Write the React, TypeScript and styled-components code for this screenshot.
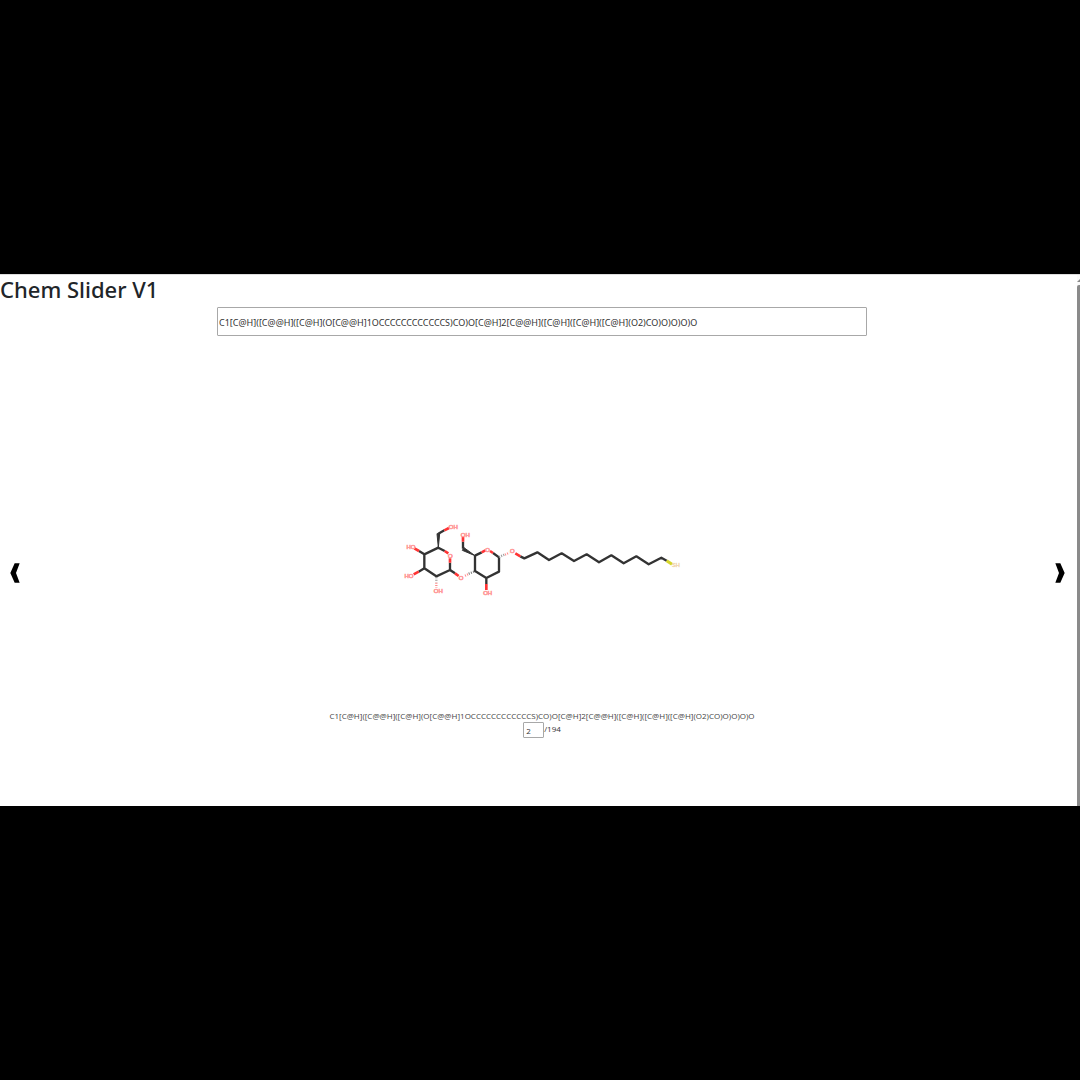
import React, { useState } from "react";
import styled, { createGlobalStyle } from "styled-components";

const GlobalStyle = createGlobalStyle`
  *, *::before, *::after { box-sizing: border-box; }
  body {
    margin: 0;
    background: #000;
    color: #212529;
    font-family: "Noto Sans", "Open Sans", sans-serif;
  }
`;

const Page = styled.div`
  min-height: 100vh;
  display: flex;
  flex-direction: column;
  justify-content: center;
`;

const Window = styled.div`
  display: flex;
  background: #fff;
  border-top: 1px solid #ddd;
`;

const Content = styled.main`
  flex: 1;
  min-width: 0;
`;

const Title = styled.h1`
  margin: 0 0 4px;
  font-size: 22px;
  font-weight: 500;
  line-height: 28px;
`;

const SearchRow = styled.form`
  display: flex;
  justify-content: center;
  padding-left: 7px;
`;

const SmilesInput = styled.input`
  width: 650px;
  max-width: 90%;
  height: 29px;
  padding: 2px 1px 0;
  border: 1px solid #a8a8a8;
  border-radius: 1px;
  color: #333;
  font-family: inherit;
  font-size: 9px;
  outline: none;
`;

const Slider = styled.section`
  display: flex;
  align-items: center;
  justify-content: space-between;
  padding: 4px 12px 0 10px;
`;

const ArrowButton = styled.button`
  display: flex;
  padding: 0;
  border: 0;
  background: none;
  color: #000;
  cursor: pointer;
`;

const Slide = styled.figure`
  display: flex;
  flex-direction: column;
  align-items: center;
  margin: 0;
  padding: 175px 0 68px 9px;
  font-family: "Open Sans", "Noto Sans", sans-serif;
`;

const Drawing = styled.svg`
  display: block;
  margin: 0 4px 105px 0;
`;

const Caption = styled.figcaption`
  color: #444;
  font-size: 8px;
  line-height: 12px;
`;

const Counter = styled.label`
  display: flex;
  color: #333;
  font-size: 8px;
  line-height: 14px;
`;

const CounterInput = styled.input`
  width: 21px;
  height: 16px;
  padding: 1px 2px 0;
  border: 1px solid #a8a8a8;
  border-radius: 1px;
  color: #333;
  font-family: inherit;
  font-size: 8px;
  outline: none;
`;

const Scrollbar = styled.div`
  width: 3px;
  padding-top: 4px;
  display: flex;
  flex-direction: column;
  gap: 3px;
  background: #fafafa;
`;

const Thumb = styled.div`
  flex: 1;
  background: #8a8a8a;
  border-radius: 2px 0 0 0;
`;

const SMILES =
  "C1[C@H]([C@@H]([C@H](O[C@@H]1OCCCCCCCCCCCCS)CO)O[C@H]2[C@@H]([C@H]([C@H]([C@H](O2)CO)O)O)O)O";

const Chevron = ({ flipped }: { flipped?: boolean }) => (
  <svg width="10" height="20" viewBox="0 0 30 60" fill="currentColor" aria-hidden="true">
    <path
      d="M14 1H29L18 30L29 59H14L1 30Z"
      transform={flipped ? "matrix(-1 0 0 1 30 0)" : undefined}
    />
  </svg>
);

const atoms: [string, number, number][] = [
  ["OH", 175, 36],
  ["HO", 48, 96],
  ["HO", 42, 182],
  ["OH", 130, 227],
  ["O", 166, 122],
  ["O", 198, 188],
  ["OH", 211, 59],
  ["O", 278, 104],
  ["OH", 278, 235],
  ["O", 352, 109],
];

const Molecule = () => (
  <Drawing width="290" height="90" viewBox="0 0 870 270" role="img" aria-label="Molecule structure">
    <g fill="none" stroke="#333" strokeWidth="7" strokeLinejoin="round">
      <path d="M165 143V165L124 184L88 160V118L130 98L149 108" />
      <path d="M130 56L148 46M88 118L72 108M88 160L71 170M165 165L180 175" />
      <path d="M240 122V168L274 189L312 170V127L294 114M240 122L260 112M274 189V207M204 101V80" />
      <path d="M376 124L388 130L427 112L462 135L500 115L537 138L575 118L612 142L649 121L686 145L724 124L761 148L799 128L815 137" />
    </g>
    <g fill="#333" stroke="#333" strokeWidth="3" strokeLinejoin="round">
      <path d="M130 98L126 56H134Z" />
      <path d="M240 122L202 106L207 98Z" />
    </g>
    <g fill="none" stroke="#ff3434" strokeWidth="8">
      <path d="M148 46L162 39M72 108L58 100M71 170L56 178M180 175L191 183M165 143V130M149 108L160 115" />
      <path d="M204 80V66M260 112L271 106M294 114L285 108M274 207V225M361 115L376 124" />
    </g>
    <g fill="none" strokeWidth="7" strokeDasharray="3 4">
      <path d="M124 187V202" stroke="#999" />
      <path d="M124 203V218" stroke="#ff8a8a" />
      <path d="M237 170L221 176" stroke="#777" />
      <path d="M219 178L207 184" stroke="#ff8a8a" />
      <path d="M312 126L328 119" stroke="#999" />
      <path d="M330 119L343 113" stroke="#ff8a8a" />
    </g>
    <path d="M815 137L831 148" stroke="#d6d52b" strokeWidth="9" />
    <g fontFamily="Liberation Sans, sans-serif" fontSize="18" textAnchor="middle">
      <g fill="#ff5c5c" stroke="#ff9c9c" strokeWidth="2">
        {atoms.map(([label, x, y]) => (
          <text key={`${x}-${y}`} x={x} y={y + 6}>
            {label}
          </text>
        ))}
      </g>
      <text x="843" y="157" fontSize="17" fill="#e5b87c" stroke="#f3dcb4">
        SH
      </text>
    </g>
  </Drawing>
);

export default function App() {
  const [smiles, setSmiles] = useState(SMILES);
  const [index, setIndex] = useState("2");
  const step = (by: number) =>
    setIndex(String(Math.min(194, Math.max(1, (Number(index) || 1) + by))));

  return (
    <Page>
      <GlobalStyle />
      <Window>
        <Content>
          <Title>Chem Slider V1</Title>
          <SearchRow onSubmit={(e) => e.preventDefault()}>
            <SmilesInput
              aria-label="SMILES"
              spellCheck={false}
              value={smiles}
              onChange={(e) => setSmiles(e.target.value)}
            />
          </SearchRow>
          <Slider>
            <ArrowButton type="button" aria-label="Previous" onClick={() => step(-1)}>
              <Chevron />
            </ArrowButton>
            <Slide>
              <Molecule />
              <Caption>{SMILES}</Caption>
              <Counter>
                <CounterInput
                  aria-label="Slide number"
                  value={index}
                  onChange={(e) => setIndex(e.target.value)}
                />
                /194
              </Counter>
            </Slide>
            <ArrowButton type="button" aria-label="Next" onClick={() => step(1)}>
              <Chevron flipped />
            </ArrowButton>
          </Slider>
        </Content>
        <Scrollbar aria-hidden="true">
          <svg width="3" height="3" viewBox="0 0 3 3">
            <path d="M0 3L3 0V3Z" fill="#8a8a8a" />
          </svg>
          <Thumb />
        </Scrollbar>
      </Window>
    </Page>
  );
}
